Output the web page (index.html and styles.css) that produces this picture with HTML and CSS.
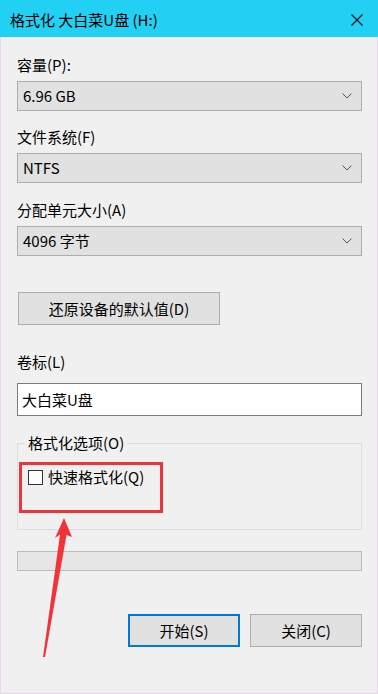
FILE: index.html
```html
<!DOCTYPE html>
<html lang="zh-CN">
<head>
  <meta charset="UTF-8" />
  <meta name="viewport" content="width=device-width, initial-scale=1.0" />
  <title>格式化 大白菜U盘 (H:)</title>
  <link rel="stylesheet" href="styles.css">
</head>
<body>

  <div class="window">
    <div class="titlebar">
      <span class="title">格式化 大白菜U盘 (H:)</span>
      <svg class="close" width="12" height="12" viewBox="0 0 12 12">
        <path d="M0.5 0.5 L11.5 11.5 M11.5 0.5 L0.5 11.5" stroke="#111" stroke-width="1.1" fill="none" />
      </svg>
    </div>

    <div class="content">
      <div class="field">
        <div class="label">容量(P):</div>
        <div class="select">
          <span>6.96 GB</span>
          <svg class="chevron" width="10" height="6" viewBox="0 0 10 6"><path d="M0.5 0.5 L5 5 L9.5 0.5" stroke="#555" fill="none" /></svg>
        </div>
      </div>

      <div class="field second">
        <div class="label">文件系统(F)</div>
        <div class="select">
          <span>NTFS</span>
          <svg class="chevron" width="10" height="6" viewBox="0 0 10 6"><path d="M0.5 0.5 L5 5 L9.5 0.5" stroke="#555" fill="none" /></svg>
        </div>
      </div>

      <div class="field third">
        <div class="label">分配单元大小(A)</div>
        <div class="select">
          <span>4096 字节</span>
          <svg class="chevron" width="10" height="6" viewBox="0 0 10 6"><path d="M0.5 0.5 L5 5 L9.5 0.5" stroke="#555" fill="none" /></svg>
        </div>
      </div>

      <button class="btn restore">还原设备的默认值(D)</button>

      <div class="field volume">
        <div class="label">卷标(L)</div>
        <div class="textbox">大白菜U盘</div>
      </div>

      <fieldset class="options">
        <legend>格式化选项(O)</legend>
        <div class="mark">
          <div class="check"><span class="box"></span>快速格式化(Q)</div>
        </div>
      </fieldset>

      <div class="progress"></div>

      <div class="actions">
        <button class="btn primary">开始(S)</button>
        <button class="btn">关闭(C)</button>
      </div>
    </div>

    <!-- red annotation arrow -->
    <svg class="arrow" width="378" height="694" viewBox="0 0 378 694">
      <polygon points="64,518 72,537 66.5,535 45,657 43,657 60,534.5 55,538" fill="#f0343a" />
    </svg>
  </div>

</body>
</html>
```

FILE: styles.css
```css
* {
  box-sizing: border-box;
}
body {
  margin: 0;
  background-color: #f0f0f0;
  font-family: "Noto Sans CJK SC", "Noto Sans", sans-serif;
  font-size: 15px;
  color: #000;
}
.window {
  position: relative;
  width: 378px;
  height: 694px;
  background-color: #f0f0f0;
  border-left: 1px solid #ecd3ef;
  border-right: 1px solid #ecd3ef;
  border-bottom: 1px solid #ecd3ef;
}
.titlebar {
  display: flex;
  align-items: center;
  justify-content: space-between;
  height: 37px;
  margin: 0 -1px;
  padding: 2px 15px 0 10px;
  background-color: #22d0f4;
}
.title {
  line-height: 20px;
}
.close {
  display: block;
}
.content {
  display: flex;
  flex-direction: column;
  padding: 18px 15px 0 16px;
}
.label {
  line-height: 20px;
  margin-bottom: 6px;
}
.second {
  margin-top: 16px;
}
.third {
  margin-top: 17px;
}
.select {
  display: flex;
  align-items: center;
  justify-content: space-between;
  height: 30px;
  padding: 0 9px 0 5px;
  background-color: #e1e1e1;
  border: 1px solid #adadad;
  line-height: 20px;
}
.chevron {
  display: block;
}
.btn {
  height: 33px;
  background-color: #e1e1e1;
  border: 1px solid #adadad;
  font-family: inherit;
  font-size: 15px;
  color: #000;
  padding: 0;
}
.restore {
  align-self: flex-start;
  width: 202px;
  margin: 36px 0 0 1px;
}
.volume {
  margin-top: 27px;
}
.volume .label {
  margin-bottom: 11px;
}
.textbox {
  height: 33px;
  padding: 0 4px;
  background-color: #fff;
  border: 1px solid #7a7a7a;
  line-height: 31px;
}
.options {
  margin: 17px 0 0;
  padding: 9px 0 16px 1px;
  border: 1px solid #dcdcdc;
  min-width: 0;
}
.options legend {
  margin-left: 6px;
  padding: 0 3px;
  line-height: 20px;
  color: #000;
}
.mark {
  width: 144px;
  height: 51px;
  padding: 2px 0 0 6px;
  border: 3px solid #e8363c;
}
.check {
  display: flex;
  align-items: center;
  gap: 5px;
  line-height: 20px;
}
.box {
  width: 15px;
  height: 15px;
  background-color: #fff;
  border: 1px solid #333;
}
.progress {
  height: 20px;
  margin-top: 21px;
  background-color: #e6e6e6;
  border: 1px solid #bcbcbc;
}
.actions {
  display: flex;
  justify-content: flex-end;
  gap: 10px;
  margin-top: 43px;
}
.actions .btn {
  width: 112px;
}
.primary {
  border: 2px solid #0078d7;
}
.arrow {
  position: absolute;
  left: -1px;
  top: 0;
  pointer-events: none;
}
```
